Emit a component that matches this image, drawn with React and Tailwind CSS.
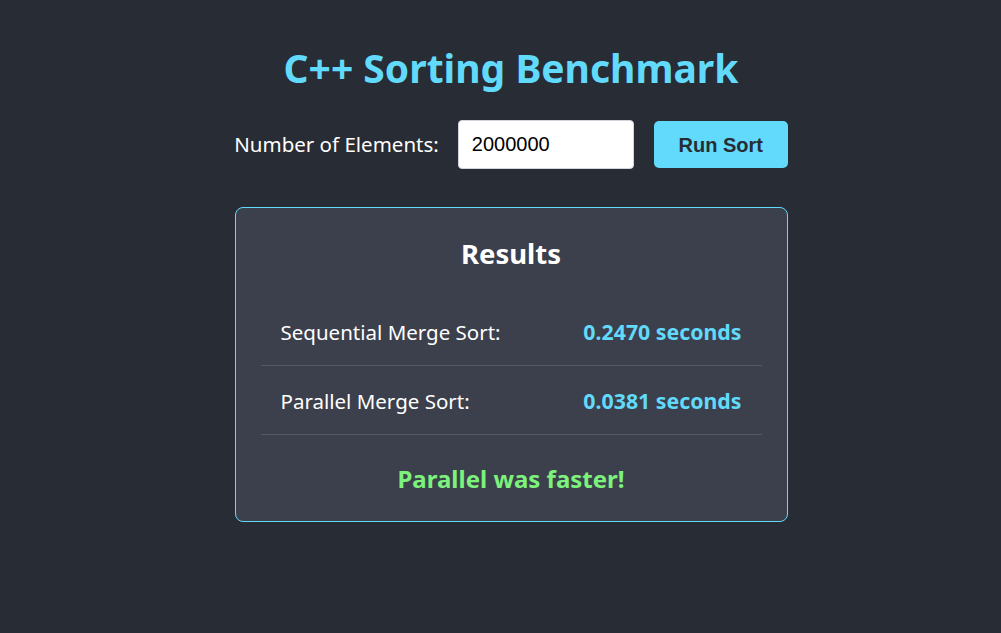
import React, { useState } from "react";

const font = { fontFamily: '"Noto Sans", "Open Sans", sans-serif' };

const ResultRow = ({ label, value, last }) => (
  <div className={`flex justify-between items-center px-5 pt-[20px] pb-[18px] ${last ? "" : "border-b border-[#555963]"}`}>
    <span className="text-[20.5px] leading-[30px] text-white">{label}</span>
    <span className="text-[21.3px] leading-[30px] font-bold text-[#61dafb]">{value}</span>
  </div>
);

const App = () => {
  const [count, setCount] = useState("2000000");

  return (
    <div className="bg-[#282c34] min-h-screen w-full text-white" style={font}>
      <div className="flex flex-col items-center pt-[40px] pl-[21px]">
        <h1 className="text-[39px] font-bold text-[#61dafb] leading-[56px]">C++ Sorting Benchmark</h1>

        {/* Input row */}
        <div className="flex items-center mt-[24px]">
          <label className="text-[20.5px] text-white mr-[19px]">Number of Elements:</label>
          <input
            type="number"
            value={count}
            onChange={(e) => setCount(e.target.value)}
            className="w-[176px] h-[49px] bg-white text-black rounded-[4px] px-[13px] text-[20px] outline-none border border-gray-300"
            style={{ fontFamily: '"Liberation Sans", Arial, sans-serif' }}
          />
          <button
            className="ml-[20px] w-[134px] h-[47px] bg-[#61dafb] text-[#282c34] rounded-[5px] text-[20px] font-bold"
            style={{ fontFamily: '"Liberation Sans", Arial, sans-serif' }}
          >
            Run Sort
          </button>
        </div>

        {/* Results card */}
        <div className="mt-[38px] w-[553px] bg-[#3c404c] border border-[#61dafb] rounded-[8px] px-[25px] pt-[22px] pb-[24px]">
          <h2 className="text-[27.5px] font-bold text-center leading-[48px]">Results</h2>
          <div className="mt-[19px]">
            <ResultRow label="Sequential Merge Sort:" value="0.2470 seconds" />
            <ResultRow label="Parallel Merge Sort:" value="0.0381 seconds" />
          </div>
          <p className="text-center text-[24px] font-bold text-[#7cf27c] mt-[26px]">Parallel was faster!</p>
        </div>
      </div>
    </div>
  );
};

export default App;
